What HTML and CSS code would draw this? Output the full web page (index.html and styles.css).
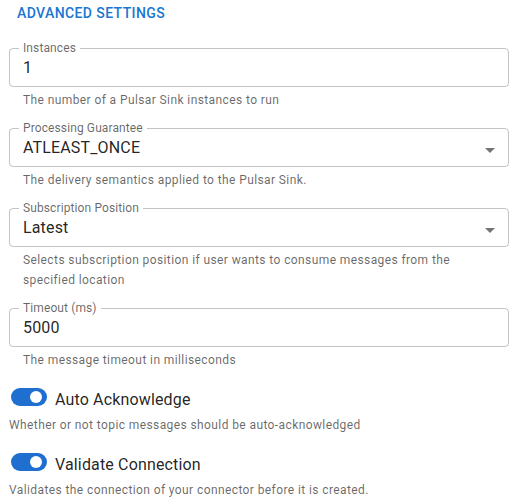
FILE: index.html
```html
<!DOCTYPE html>
<html lang="en">
<head>
<meta charset="utf-8">
<title>Advanced Settings</title>
<link rel="stylesheet" href="styles.css">
</head>
<body>
<div class="panel">
  <div class="title">Advanced Settings</div>

  <div class="field">
    <fieldset class="box">
      <legend class="label">Instances</legend>
      <div class="value-row"><span class="value">1</span></div>
    </fieldset>
    <p class="helper">The number of a Pulsar Sink instances to run</p>
  </div>

  <div class="field">
    <fieldset class="box">
      <legend class="label">Processing Guarantee</legend>
      <div class="value-row">
        <span class="value">ATLEAST_ONCE</span>
        <svg class="arrow" viewBox="0 0 24 24" width="24" height="24"><path d="M7 10l5 5 5-5z"/></svg>
      </div>
    </fieldset>
    <p class="helper">The delivery semantics applied to the Pulsar Sink.</p>
  </div>

  <div class="field">
    <fieldset class="box">
      <legend class="label">Subscription Position</legend>
      <div class="value-row">
        <span class="value">Latest</span>
        <svg class="arrow" viewBox="0 0 24 24" width="24" height="24"><path d="M7 10l5 5 5-5z"/></svg>
      </div>
    </fieldset>
    <p class="helper">Selects subscription position if user wants to consume messages from the specified location</p>
  </div>

  <div class="field">
    <fieldset class="box">
      <legend class="label">Timeout (ms)</legend>
      <div class="value-row"><span class="value">5000</span></div>
    </fieldset>
    <p class="helper">The message timeout in milliseconds</p>
  </div>

  <div class="toggle">
    <div class="toggle-row">
      <span class="track"><span class="thumb"></span></span>
      <span class="toggle-label">Auto Acknowledge</span>
    </div>
    <p class="toggle-help">Whether or not topic messages should be auto-acknowledged</p>
  </div>

  <div class="toggle">
    <div class="toggle-row">
      <span class="track"><span class="thumb"></span></span>
      <span class="toggle-label">Validate Connection</span>
    </div>
    <p class="toggle-help">Validates the connection of your connector before it is created.</p>
  </div>
</div>
</body>
</html>
```

FILE: styles.css
```css
* { box-sizing: border-box; }

html, body {
  margin: 0;
  padding: 0;
  background: #ffffff;
}

body {
  font-family: Roboto, "Liberation Sans", Arial, sans-serif;
  color: rgba(0, 0, 0, 0.87);
}

.panel {
  width: 500px;
  margin-left: 9px;
  display: flex;
  flex-direction: column;
}

.title {
  margin-left: 8px;
  font-size: 14px;
  font-weight: 500;
  line-height: 26px;
  letter-spacing: 0.4px;
  text-transform: uppercase;
  color: #1976d2;
  margin-bottom: 16px;
}

.field {
  margin-bottom: 12px;
}

.box {
  margin: 0;
  padding: 0 13px;
  border: 1px solid rgba(0, 0, 0, 0.23);
  border-radius: 4px;
  min-width: 0;
}

.label {
  margin-left: -4px;
  padding: 0 4px;
  font-size: 12px;
  line-height: 12px;
  letter-spacing: 0.11px;
  color: rgba(0, 0, 0, 0.6);
}

.value-row {
  display: flex;
  align-items: center;
  justify-content: space-between;
  height: 32px;
  padding: 2px 0 6px;
}

.value {
  font-size: 16px;
  line-height: 24px;
  letter-spacing: 0.15px;
  color: rgba(0, 0, 0, 0.87);
}

.arrow {
  flex: none;
  margin-right: -7px;
  margin-top: 4px;
  fill: rgba(0, 0, 0, 0.54);
}

.helper {
  margin: 3px 14px 0;
  font-size: 12px;
  line-height: 20px;
  letter-spacing: 0.4px;
  color: rgba(0, 0, 0, 0.6);
}

.toggle {
  margin-top: 6px;
  margin-bottom: 12px;
}

.toggle-row {
  display: flex;
  align-items: flex-start;
  gap: 8px;
  height: 24px;
}

.track {
  flex: none;
  margin-left: 2px;
  width: 36px;
  height: 18px;
  border-radius: 9px;
  background: #1f6fd1;
  display: flex;
  align-items: center;
  justify-content: flex-end;
  padding-right: 5px;
}

.thumb {
  width: 12px;
  height: 12px;
  border-radius: 50%;
  background: #ffffff;
}

.toggle-label {
  font-size: 16px;
  line-height: 24px;
  letter-spacing: 0.15px;
  color: rgba(0, 0, 0, 0.87);
}

.toggle-help {
  margin: 3px 0 0;
  font-size: 12px;
  line-height: 20px;
  letter-spacing: 0.4px;
  color: rgba(0, 0, 0, 0.6);
}
```
